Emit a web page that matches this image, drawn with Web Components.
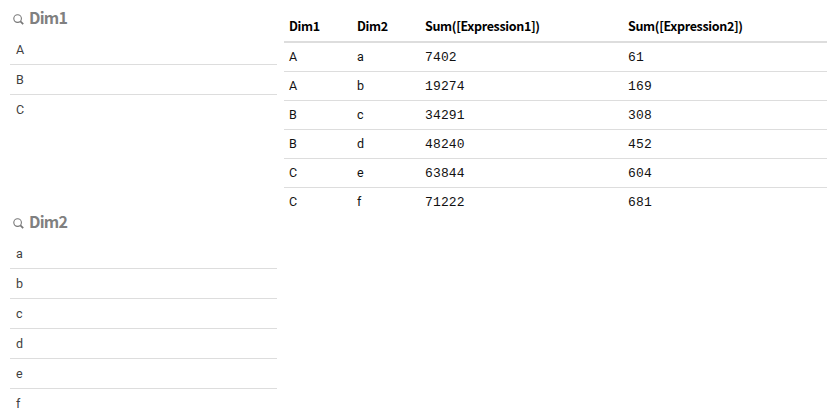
<!DOCTYPE html>
<html lang="en"><head><meta charset="utf-8"><title>Dimensions</title>
<style>
body{margin:0;background:#fff;font-family:Roboto,sans-serif}
</style></head><body>
<dash-board></dash-board>
<script>
class FilterPane extends HTMLElement{
 connectedCallback(){
  const root=this.attachShadow({mode:'open'});
  root.innerHTML=`<style>
  :host{display:block;color:#404040;font-size:12.5px}
  header{display:flex;align-items:center;height:35px;padding:3px 0 0 3px;box-sizing:border-box}
  svg{display:block;width:11px;height:11px;margin-right:5px}
  h2{margin:-4px 0 0;font:700 16px/32px "Noto Sans CJK SC",sans-serif;letter-spacing:-.75px;color:#808080}
  ul{list-style:none;margin:0;padding:0}
  li{box-sizing:border-box;height:30px;line-height:30px;padding-left:6px;border-bottom:1px solid #ddd}
  li:last-child{border-bottom:0}
  </style><header><svg viewBox="0 0 11 11" fill="none" stroke="#777"><circle cx="4.6" cy="4.6" r="3.8" stroke-width="1.1"/><path d="M7.4 7.4L10.2 10.2" stroke-width="1.7"/></svg><h2><slot></slot></h2></header>
  <ul>${this.getAttribute('values').split(',').map(v=>`<li>${v}</li>`).join('')}</ul>`;
 }
}
customElements.define('filter-pane',FilterPane);
class DataTable extends HTMLElement{
 connectedCallback(){
  const rows=[['A','a',7402,61],['A','b',19274,169],['B','c',34291,308],['B','d',48240,452],['C','e',63844,604],['C','f',71222,681]];
  this.attachShadow({mode:'open'}).innerHTML=`<style>
  :host{display:block;color:#111;font-size:12.5px}
  .row{display:grid;grid-template-columns:68px 68px 203px 1fr;padding-left:5px;box-sizing:border-box;height:29px;line-height:27px;border-bottom:1px solid #ddd}
  .row:last-child{border-bottom:0}
  .head{height:31px;line-height:28px;border-bottom:2px solid #ddd;font-family:"Noto Sans CJK SC",sans-serif;font-weight:700;color:#000;font-size:12.5px;letter-spacing:-.34px}
  .num{font-family:"Liberation Mono",monospace;letter-spacing:.15px;line-height:30px;font-size:13px}
  </style><div class="row head"><span>Dim1</span><span>Dim2</span><span>Sum([Expression1])</span><span>Sum([Expression2])</span></div>
  ${rows.map(r=>`<div class="row">${r.map((v,i)=>`<span${i>1?' class="num"':''}>${v}</span>`).join('')}</div>`).join('')}`;
 }
}
customElements.define('data-table',DataTable);
class DashBoard extends HTMLElement{
 connectedCallback(){
  this.attachShadow({mode:'open'}).innerHTML=`<style>
  :host{display:grid;grid-template-columns:267px 543px;column-gap:7px;padding-left:10px;height:418px;overflow:hidden;box-sizing:border-box}
  .left{display:grid;grid-template-rows:204px 1fr}
  data-table{padding-top:12px}
  </style><div class="left"><filter-pane values="A,B,C">Dim1</filter-pane><filter-pane values="a,b,c,d,e,f">Dim2</filter-pane></div><data-table></data-table>`;
 }
}
customElements.define('dash-board',DashBoard);
</script></body></html>
